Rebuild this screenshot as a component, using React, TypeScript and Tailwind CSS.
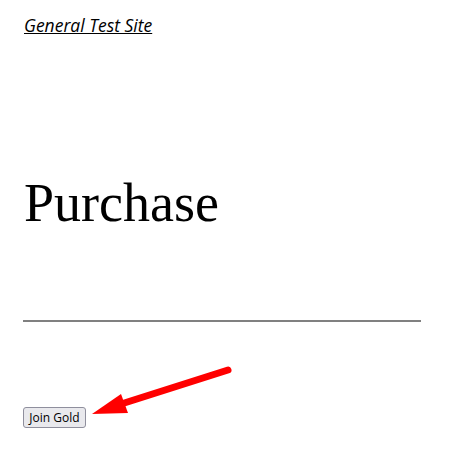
import React from "react";

export default function App() {
  return (
    <div className="relative w-[457px] h-[453px] bg-white overflow-hidden">
      <div className="px-[23px] pt-[13px]">
        <div className="h-[25px] pl-[1px]">
          <a
            href="#"
            className="italic underline text-[17.5px] leading-[25px] text-black"
            style={{ fontFamily: '"Open Sans", sans-serif' }}
          >
            General Test Site
          </a>
        </div>
        <h1
          className="mt-[133px] pl-[1px] text-[54px] leading-[65px] font-normal text-black"
          style={{ fontFamily: '"Liberation Serif", serif' }}
        >
          Purchase
        </h1>
        <div className="mt-[84px] w-[398px] h-[2px] bg-[#808080]" />
        <div className="mt-[85px] flex">
          <button
            className="h-[21px] w-[63px] px-[4px] border border-[#8f8f9d] rounded-[3px] bg-[#e9e9ed] text-[12px] leading-[17px] text-black"
            style={{ fontFamily: '"Open Sans", sans-serif' }}
          >
            Join Gold
          </button>
        </div>
      </div>
      <svg
        className="absolute left-0 top-0"
        width="457"
        height="453"
        viewBox="0 0 457 453"
      >
        <line
          x1="228"
          y1="370"
          x2="118"
          y2="405"
          stroke="#ff0000"
          strokeWidth="7"
          strokeLinecap="round"
        />
        <polygon points="92,414 121,394 128,413" fill="#ff0000" />
      </svg>
    </div>
  );
}
